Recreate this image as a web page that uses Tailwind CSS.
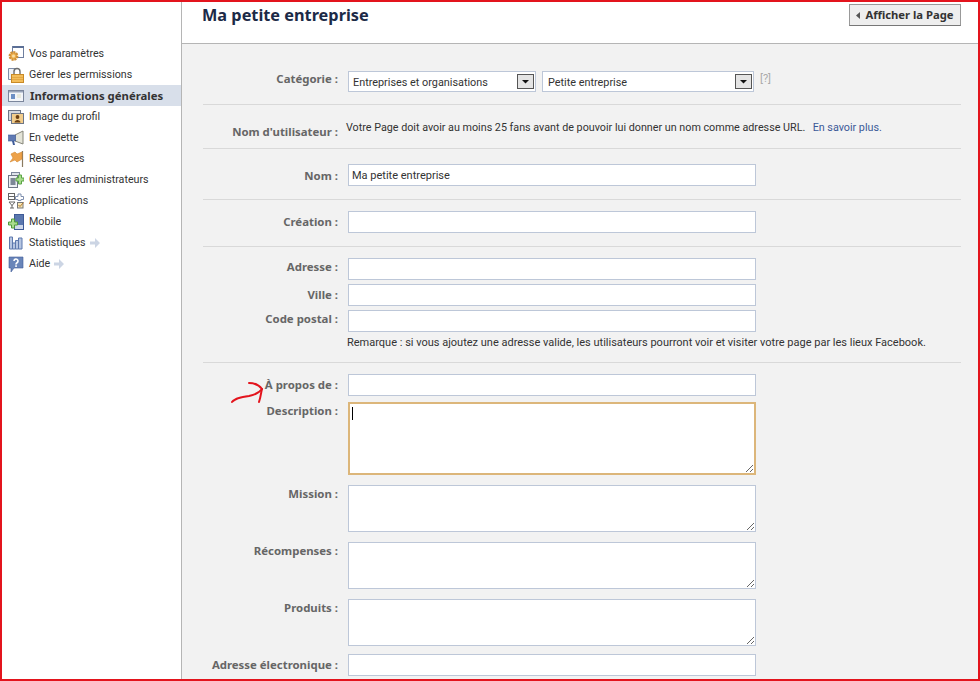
<!DOCTYPE html>
<html lang="fr"><head><meta charset="utf-8"><title>Ma petite entreprise</title>
<script src="https://cdn.jsdelivr.net/npm/@tailwindcss/browser@4"></script></head>
<body class="m-0 overflow-hidden bg-white">
<div class="relative flex h-[681px] w-[980px] overflow-hidden bg-white font-['Roboto','Noto_Sans',sans-serif] text-[11px] text-[#333]">
  <aside class="w-[182px] shrink-0 border-r border-[#b5b5b5] pt-[43px] text-[10.7px]">
    <ul class="flex flex-col">
      <li class="flex h-[21px] items-center gap-[5px] pl-[8px]"><svg class="h-4 w-4 shrink-0" viewBox="0 0 16 16"><rect x="4.500" y="0.500" width="11" height="11" fill="#fff" stroke="#6f7f9f"/><rect x="5" y="0" width="11" height="2" fill="#5b6f96"/><circle cx="5.500" cy="10" r="3.700" fill="#eeb04f" stroke="#cf9038" stroke-width="2.400" stroke-dasharray="2 .8"/><circle cx="5.500" cy="10" r="1.500" fill="#f9dfa6"/></svg><span class="pt-px">Vos paramètres</span></li>
      <li class="flex h-[21px] items-center gap-[5px] pl-[8px]"><svg class="h-4 w-4 shrink-0" viewBox="0 0 16 16"><path d="M9 1.500H.5v11H4" fill="#eef1f6" stroke="#7f8da8"/><path d="M6 8V4.500a3 3 0 0 1 6 0V8" fill="none" stroke="#6d6d6d" stroke-width="1.400"/><rect x="3.500" y="7.500" width="12" height="8" fill="#f3bd5a" stroke="#c98a26"/><path d="M4 10.500h11M4 12.500h11" stroke="#dc9f3a" stroke-width=".7"/></svg><span class="pt-px">Gérer les permissions</span></li>
      <li class="flex h-[21px] items-center gap-[6px] bg-[#d8dfea] pl-[8px]"><svg class="h-4 w-4 shrink-0" viewBox="0 0 16 16"><rect x="0.500" y="2.500" width="15" height="11" fill="#f3f5f9" stroke="#7b869c"/><rect x="1" y="3" width="14" height="1.500" fill="#9aa5ba"/><rect x="3" y="6" width="4" height="5" fill="#6d8fc4"/><path d="M9 7h4M9 9h4" stroke="#dcdcc0"/></svg><span class="font-['Noto_Sans'] text-[11.35px] font-bold">Informations générales</span></li>
      <li class="flex h-[21px] items-center gap-[5px] pl-[8px]"><svg class="h-4 w-4 shrink-0" viewBox="0 0 16 16"><rect x="0.500" y="1.500" width="12" height="10" fill="#d5d8de" stroke="#6e7686"/><rect x="3.500" y="4.500" width="12" height="10" fill="#f3cd8b" stroke="#6e7686"/><circle cx="9.500" cy="8" r="1.900" fill="#6b3f12"/><path d="M6.500 13.500c0-3.500 6-3.500 6 0z" fill="#6b3f12"/></svg><span class="pt-px">Image du profil</span></li>
      <li class="flex h-[21px] items-center gap-[5px] pl-[8px]"><svg class="h-4 w-4 shrink-0" viewBox="0 0 16 16"><path d="M15 1v13L7 11V5z" fill="#e4e4d8" stroke="#86867a"/><rect x="0.500" y="5" width="7" height="6" fill="#5f79b3" stroke="#3f5b98" stroke-width=".6"/><path d="M4 11l1 4h2l-1-4z" fill="#3f5b98"/></svg><span class="pt-px">En vedette</span></li>
      <li class="flex h-[21px] items-center gap-[5px] pl-[8px]"><svg class="h-4 w-4 shrink-0" viewBox="0 0 16 16"><path d="M14.500 0v16" stroke="#8a7a60" stroke-width="1.200"/><path d="M14 1 9 3 7 1 3 3 5 7 2 11l5-2 2 2 5-3z" fill="#eda24a" stroke="#d18630" stroke-width=".6"/></svg><span class="pt-px">Ressources</span></li>
      <li class="flex h-[21px] items-center gap-[5px] pl-[8px]"><svg class="h-4 w-4 shrink-0" viewBox="0 0 16 16"><rect x="3.500" y="0.500" width="8" height="11" fill="#dfe3ea" stroke="#7b869c"/><rect x="0.500" y="3.500" width="9" height="12" fill="#eef0f4" stroke="#6e7686"/><rect x="2.500" y="6" width="5" height="7" fill="#7d8797"/><path d="M10.500 3h3v3h2.500v3h-2.500v3h-3V9H8V6h2.500z" fill="#a9dc8e" stroke="#5aa545"/></svg><span class="pt-px">Gérer les administrateurs</span></li>
      <li class="flex h-[21px] items-center gap-[5px] pl-[8px]"><svg class="h-4 w-4 shrink-0" viewBox="0 0 16 16"><rect x="0.500" y="0.500" width="6" height="6" fill="#fff" stroke="#666"/><path d="M1 3.500h5" stroke="#666"/><path d="M10 1h3v2.500h2.500v3H13v1h-3v-1H7.500v-3H10z" fill="#fff" stroke="#7f8fae"/><path d="M1 9h6L4 12.500z M4 12v3M2 15h4" fill="#fff" stroke="#666"/><rect x="9.500" y="9.500" width="5.500" height="5.500" fill="#f7e7b5" stroke="#777"/><path d="m10.500 12 1.500 1.500 3.500-4" fill="none" stroke="#b5772a"/></svg><span class="pt-px">Applications</span></li>
      <li class="flex h-[21px] items-center gap-[5px] pl-[8px]"><svg class="h-4 w-4 shrink-0" viewBox="0 0 16 16"><rect x="6.500" y="0.500" width="9" height="15" fill="#5a77ae" stroke="#3f5b98"/><rect x="7" y="11" width="8" height="4" fill="#cfd8ea"/><path d="M3.500 5h3v3h3v3h-3v3h-3v-3H.5V8h3z" fill="#a9dc8e" stroke="#4f9a3a"/></svg><span class="pt-px">Mobile</span></li>
      <li class="flex h-[21px] items-center gap-[5px] pl-[8px]"><svg class="h-4 w-4 shrink-0" viewBox="0 0 16 16"><path d="M1.500 2h3v12h-3zM4.500 8h3v6h-3zM7.500 5.500h3v8.500h-3zM10.500 3h3.500v11h-3.500z" fill="#b7c6e2" stroke="#5d78ad"/></svg><span class="pt-px">Statistiques</span><svg class="-ml-[1px] h-[10px] w-[10px]" viewBox="0 0 10 10"><path d="M0 3.500h5V0l5 5-5 5V6.500H0z" fill="#ccd5e4"/></svg></li>
      <li class="flex h-[21px] items-center gap-[5px] pl-[8px]"><svg class="h-4 w-4 shrink-0" viewBox="0 0 16 16"><path d="M1 1h14v11H6l-3 4v-4H1z" fill="#6985b9" stroke="#3f5b98" stroke-width=".6"/><path d="M6 5a2 2 0 1 1 3 1.800c-.8.500-1 .800-1 1.700" fill="none" stroke="#fff" stroke-width="1.600"/><rect x="7.200" y="9.300" width="1.700" height="1.600" fill="#fff"/></svg><span class="pt-px">Aide</span><svg class="-ml-[1px] h-[10px] w-[10px]" viewBox="0 0 10 10"><path d="M0 3.500h5V0l5 5-5 5V6.500H0z" fill="#ccd5e4"/></svg></li>
    </ul>
  </aside>
  <div class="flex min-w-0 flex-1 flex-col">
    <header class="flex h-[44px] shrink-0 items-start justify-between border-b border-[#b5b5b5] bg-white pl-[20px] pr-[19px]">
      <h1 class="mt-[4px] font-['Noto_Sans'] text-[16.3px] font-bold leading-[22px] text-[#1c2a47]">Ma petite entreprise</h1>
      <button class="mt-[4px] flex h-[22px] w-[112px] items-center justify-center gap-[5px] border border-[#999] border-b-[#777] bg-[#eee] font-['Noto_Sans'] text-[11.25px] font-bold text-[#333]"><svg class="h-[7px] w-[4px]" viewBox="0 0 4 7"><path d="M4 0v7L0 3.500z" fill="#555"/></svg>Afficher la Page</button>
    </header>
    <main class="flex flex-1 flex-col bg-[#f2f2f2] pl-[21px] pr-[19px]">
      <div class="flex h-[61px] items-start gap-[10px] border-b border-[#d9d9d9] pt-[27px]">
        <label class="w-[135px] text-right font-['Noto_Sans'] text-[11.4px] font-bold leading-[16px] text-[#666]">Catégorie :</label>
        <div class="flex h-[21px] w-[188px] items-center justify-between border border-[#bdc7d8] bg-white pl-[4px] pr-[1px] text-[10.85px]"><span class="translate-y-[2px]">Entreprises et organisations</span><svg class="h-[15px] w-[17px]" viewBox="0 0 17 15"><rect x=".5" y=".5" width="16" height="14" fill="#e4e4e4" stroke="#555"/><path d="M5 6h7l-3.500 3.500z" fill="#111"/></svg></div>
        <div class="-ml-[4px] flex h-[21px] w-[212px] items-center justify-between border border-[#bdc7d8] bg-white pl-[5px] pr-[1px] text-[10.85px]"><span class="translate-y-[2px]">Petite entreprise</span><svg class="h-[15px] w-[17px]" viewBox="0 0 17 15"><rect x=".5" y=".5" width="16" height="14" fill="#e4e4e4" stroke="#555"/><path d="M5 6h7l-3.500 3.500z" fill="#111"/></svg></div>
        <span class="-ml-[4px] pt-[1px] text-[11px] leading-[14px] text-[#aaa]">[?]</span>
      </div>
      <div class="flex h-[44px] items-start border-b border-[#d9d9d9] pt-[15px]">
        <label class="w-[135px] pt-[4px] text-right font-['Noto_Sans'] text-[11.4px] font-bold leading-[16px] text-[#666]">Nom d'utilisateur :</label>
        <p class="ml-[8px] pt-[1px] text-[10.75px] leading-[14px]">Votre Page doit avoir au moins 25 fans avant de pouvoir lui donner un nom comme adresse URL.&nbsp; <a class="ml-[2px] text-[#3b5998]">En savoir plus.</a></p>
      </div>
      <div class="flex h-[51px] items-start gap-[10px] border-b border-[#d9d9d9] pt-[15px]">
        <label class="w-[135px] pt-[4px] text-right font-['Noto_Sans'] text-[11.4px] font-bold leading-[16px] text-[#666]">Nom :</label>
        <input class="h-[22px] w-[408px] border border-[#bdc7d8] bg-white px-[3px] text-[11px] text-[#333]" value="Ma petite entreprise">
      </div>
      <div class="flex h-[47px] items-start gap-[10px] border-b border-[#d9d9d9] pt-[11px]">
        <label class="w-[135px] pt-[3px] text-right font-['Noto_Sans'] text-[11.4px] font-bold leading-[16px] text-[#666]">Création :</label>
        <input class="h-[22px] w-[408px] border border-[#bdc7d8] bg-white">
      </div>
      <div class="flex h-[116px] flex-col border-b border-[#d9d9d9] pt-[11px]">
        <div class="flex items-start gap-[10px]"><label class="w-[135px] pt-[1px] text-right font-['Noto_Sans'] text-[11.4px] font-bold leading-[16px] text-[#666]">Adresse :</label><input class="h-[22px] w-[408px] border border-[#bdc7d8] bg-white"></div>
        <div class="mt-[4px] flex items-start gap-[10px]"><label class="w-[135px] pt-[3px] text-right font-['Noto_Sans'] text-[11.4px] font-bold leading-[16px] text-[#666]">Ville :</label><input class="h-[22px] w-[408px] border border-[#bdc7d8] bg-white"></div>
        <div class="mt-[4px] flex items-start gap-[10px]"><label class="w-[135px] pt-[1px] text-right font-['Noto_Sans'] text-[11.4px] font-bold leading-[16px] text-[#666]">Code postal :</label><input class="h-[22px] w-[408px] border border-[#bdc7d8] bg-white"></div>
        <p class="ml-[144px] mt-[4px] whitespace-nowrap leading-[14px]">Remarque : si vous ajoutez une adresse valide, les utilisateurs pourront voir et visiter votre page par les lieux Facebook.</p>
      </div>
      <div class="flex flex-col pt-[11px]">
        <div class="flex items-start gap-[10px]"><label class="w-[135px] pt-[3px] text-right font-['Noto_Sans'] text-[11.4px] font-bold leading-[16px] text-[#666]">À propos de :</label><input class="h-[22px] w-[408px] border border-[#bdc7d8] bg-white"></div>
        <div class="mt-[6px] flex items-start gap-[10px]"><label class="w-[135px] pt-[1px] text-right font-['Noto_Sans'] text-[11.4px] font-bold leading-[16px] text-[#666]">Description :</label><div class="relative h-[73px] w-[408px]"><textarea class="block h-full w-full border-2 border-[#dcb67a] bg-white"></textarea><span class="absolute left-[4px] top-[5px] h-[13px] w-px bg-black"></span></div></div>
        <div class="mt-[10px] flex items-start gap-[10px]"><label class="w-[135px] pt-[1px] text-right font-['Noto_Sans'] text-[11.4px] font-bold leading-[16px] text-[#666]">Mission :</label><textarea class="block h-[47px] w-[408px] border border-[#bdc7d8] bg-white"></textarea></div>
        <div class="mt-[10px] flex items-start gap-[10px]"><label class="w-[135px] pt-[1px] text-right font-['Noto_Sans'] text-[11.4px] font-bold leading-[16px] text-[#666]">Récompenses :</label><textarea class="block h-[47px] w-[408px] border border-[#bdc7d8] bg-white"></textarea></div>
        <div class="mt-[10px] flex items-start gap-[10px]"><label class="w-[135px] pt-[1px] text-right font-['Noto_Sans'] text-[11.4px] font-bold leading-[16px] text-[#666]">Produits :</label><textarea class="block h-[47px] w-[408px] border border-[#bdc7d8] bg-white"></textarea></div>
        <div class="mt-[8px] flex items-start gap-[10px]"><label class="w-[135px] pt-[3px] text-right font-['Noto_Sans'] text-[11.4px] font-bold leading-[16px] text-[#666]">Adresse électronique :</label><input class="h-[22px] w-[408px] border border-[#bdc7d8] bg-white"></div>
      </div>
    </main>
  </div>
  <svg class="pointer-events-none absolute left-[228px] top-[378px] h-[30px] w-[40px]" viewBox="0 0 40 30" fill="none" stroke="#e3141d" stroke-width="2" stroke-linecap="round"><path d="M4 24c3-4 10-5 17-6 5-1 10-3 13-7"/><path d="M21 5c5 0 10 2 13 6-1 3-1 7-3 13"/></svg>
  <div class="pointer-events-none absolute inset-0 border-2 border-[#e3141d]"></div>
</div>
</body></html>
